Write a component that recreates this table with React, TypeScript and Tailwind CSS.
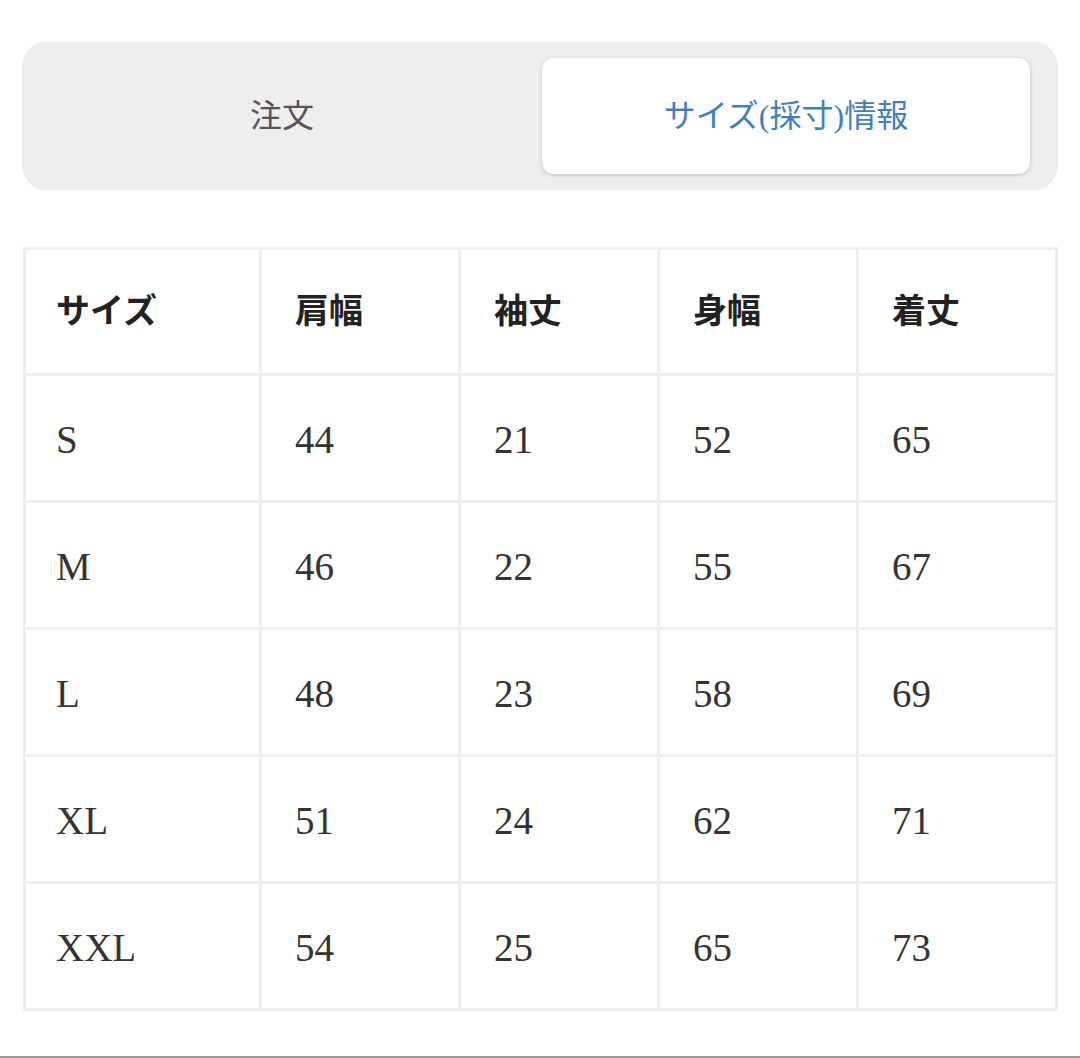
const rows = [
  ['S', '44', '21', '52', '65'],
  ['M', '46', '22', '55', '67'],
  ['L', '48', '23', '58', '69'],
  ['XL', '51', '24', '62', '71'],
  ['XXL', '54', '25', '65', '73'],
];

const headers = ['サイズ', '肩幅', '袖丈', '身幅', '着丈'];

const font = "font-['Liberation_Serif','Noto_Sans_CJK_JP',serif]";

export default function App() {
  return (
    <div className={`relative h-[1058px] w-[1080px] overflow-hidden bg-white ${font}`}>
      {/* Tabs */}
      <div className="ml-[22px] mt-[42px] flex h-[148px] w-[1036px] rounded-[24px] bg-[#eeeeee] py-4 pr-7">
        <button className="flex flex-1 items-center justify-center text-[32px] text-[#555555]">
          注文
        </button>
        <button className="flex w-[488px] items-center justify-center rounded-[12px] bg-white text-[32px] text-[#3f7fc0] shadow-[0_1px_4px_rgba(0,0,0,0.18)]">
          サイズ(採寸)情報
        </button>
      </div>

      {/* Size table */}
      <div className="ml-[23px] mt-[57px] grid w-[1035px] grid-cols-[236px_199px_199px_199px_199px] border-l-[3px] border-t-[3px] border-[#eeeeee]">
        {headers.map((h, i) => (
          <div
            key={h}
            className={`flex h-[126px] items-center border-b-[3px] border-r-[3px] border-[#eeeeee] text-[34px] font-bold text-[#222222] ${
              i === 0 ? 'pl-[30px]' : 'pl-[33px]'
            }`}
          >
            {h}
          </div>
        ))}
        {rows.map((row) =>
          row.map((cell, i) => (
            <div
              key={row[0] + i}
              className={`flex h-[127px] items-center border-b-[3px] border-r-[3px] border-[#eeeeee] pt-[5px] text-[39px] text-[#333333] ${
                i === 0 ? 'pl-[30px]' : 'pl-[33px]'
              }`}
            >
              {cell}
            </div>
          ))
        )}
      </div>

      <div className="absolute bottom-0 left-0 h-[2px] w-full bg-[#9a9a9a]" />
    </div>
  );
}
